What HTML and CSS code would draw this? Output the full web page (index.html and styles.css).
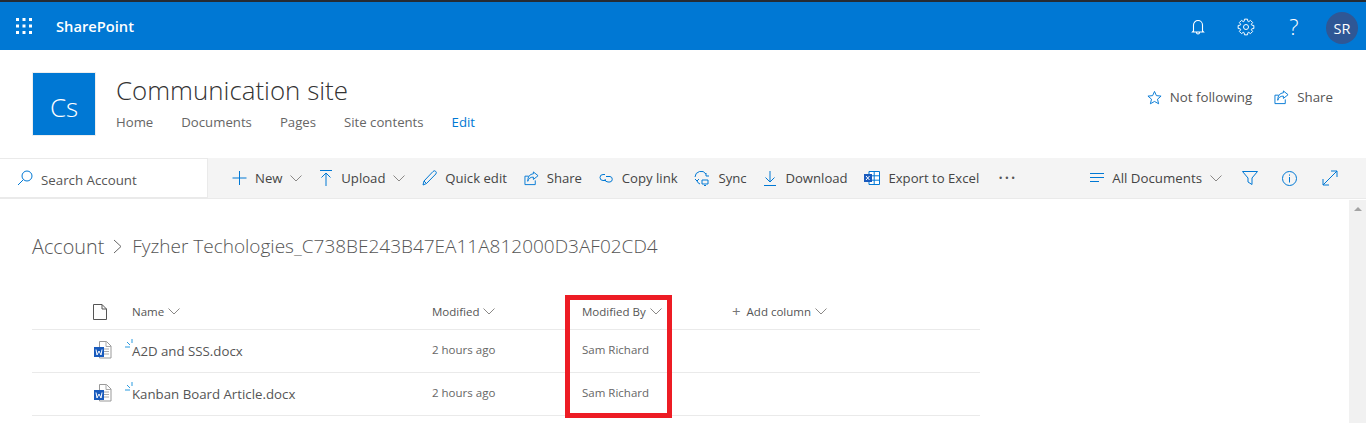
FILE: index.html
```html
<!DOCTYPE html>
<html lang="en">
<head>
    <meta charset="UTF-8">
    <title>Communication site - Account</title>
    <link rel="stylesheet" href="styles.css">
</head>
<body>

<svg class="sprites" width="0" height="0">
    <symbol id="chev" viewBox="0 0 12 7"><path d="M.5.5 6 6 11.500.5" fill="none" stroke="currentColor"/></symbol>
    <symbol id="share" viewBox="0 0 16 16"><path d="M10 1l5 4-5 4V6.500C6.500 6.500 5 8 4 11c0-5 2-7.500 6-8zM12 10v4.500H1v-9h4" fill="none" stroke="currentColor"/></symbol>
    <symbol id="word" viewBox="0 0 18 18">
        <path d="M5.500.5h7l4.500 4.500v12H5.500z" fill="#fff" stroke="#999"/>
        <path d="M12 .5V5.500h5M10 8h5M10 10.500h5M10 13h5" fill="none" stroke="#aaa"/>
        <rect y="6" width="10" height="10" fill="#185abd"/>
        <path d="M2 8.500l1 5.500 2-4 2 4 1-5.500" fill="none" stroke="#fff"/>
    </symbol>
</svg>

<header class="suite-bar">
    <svg class="waffle" width="16" height="16" viewBox="0 0 16 16" fill="#fff">
        <rect width="3" height="3"/><rect x="6.500" width="3" height="3"/><rect x="13" width="3" height="3"/>
        <rect y="6.500" width="3" height="3"/><rect x="6.500" y="6.500" width="3" height="3"/><rect x="13" y="6.500" width="3" height="3"/>
        <rect y="13" width="3" height="3"/><rect x="6.500" y="13" width="3" height="3"/><rect x="13" y="13" width="3" height="3"/>
    </svg>
    <span class="brand">SharePoint</span>
    <div class="suite-icons">
        <span class="suite-slot">
            <svg width="14" height="16" viewBox="0 0 14 16" fill="none" stroke="#fff" stroke-width="1.100"><path d="M2.500 12V6a4.500 4.500 0 0 1 9 0v6l1 1h-11zM5.500 13.500a1.500 1.500 0 0 0 3 0"/></svg>
        </span>
        <span class="suite-slot">
            <svg width="18" height="18" viewBox="-9 -9 18 18" fill="none" stroke="#fff" stroke-linejoin="round">
                <circle r="2.500"/>
                <polygon points="-1.850,-5.710 -1.530,-7.850 1.530,-7.850 1.850,-5.710 2.730,-5.340 4.470,-6.630 6.630,-4.470 5.340,-2.730 5.710,-1.850 7.850,-1.530 7.850,1.530 5.710,1.850 5.340,2.730 6.630,4.470 4.470,6.630 2.730,5.340 1.850,5.710 1.530,7.850 -1.530,7.850 -1.850,5.710 -2.730,5.340 -4.470,6.630 -6.630,4.470 -5.340,2.730 -5.710,1.850 -7.850,1.530 -7.850,-1.530 -5.710,-1.850 -5.340,-2.730 -6.630,-4.470 -4.470,-6.630 -2.730,-5.340"/>
            </svg>
        </span>
        <span class="suite-slot help">?</span>
        <span class="suite-slot"><span class="avatar">SR</span></span>
    </div>
</header>

<section class="site-head">
    <div class="site-logo">Cs</div>
    <div class="site-info">
        <h1>Communication site</h1>
        <nav class="site-nav">
            <a>Home</a>
            <a>Documents</a>
            <a>Pages</a>
            <a>Site contents</a>
            <a class="edit">Edit</a>
        </nav>
    </div>
    <div class="site-actions">
        <span class="action">
            <svg width="15" height="15" viewBox="0 0 16 16" fill="none" stroke="#0078d4"><path d="M8 1.500l2 4.500 5 .5-3.800 3.300 1.200 4.900L8 12.200l-4.400 2.500 1.200-4.900L1 6.500 6 6z"/></svg>
            Not following
        </span>
        <span class="action">
            <svg class="icon-share" width="15" height="15"><use href="#share"/></svg>
            Share
        </span>
    </div>
</section>

<section class="command-row">
    <div class="search-box">
        <svg width="16" height="16" viewBox="0 0 16 16" fill="none" stroke="#0078d4"><circle cx="10" cy="6" r="5"/><path d="M6.500 9.500 1 15"/></svg>
        <span class="search-text">Search Account</span>
    </div>
    <div class="command-bar">
        <div class="commands">
            <span class="cmd">
                <svg width="15" height="14" viewBox="0 0 14 14" stroke="#0078d4"><path d="M7 0v14M0 7h14"/></svg>
                New
                <svg class="chev" width="12" height="7"><use href="#chev"/></svg>
            </span>
            <span class="cmd">
                <svg width="14" height="16" viewBox="0 0 14 16" fill="none" stroke="#0078d4"><path d="M1 .5h12M7 3v13M2.500 7.500 7 3l4.500 4.500"/></svg>
                Upload
                <svg class="chev" width="12" height="7"><use href="#chev"/></svg>
            </span>
            <span class="cmd">
                <svg width="15" height="16" viewBox="0 0 15 16" fill="none" stroke="#0078d4"><path d="M1 15l1-4L11 1.500a1.800 1.800 0 0 1 2.800 2.500L4.500 13.500zM2 11l2.500 2.500"/></svg>
                Quick edit
            </span>
            <span class="cmd">
                <svg class="icon-share" width="15" height="15"><use href="#share"/></svg>
                Share
            </span>
            <span class="cmd">
                <svg width="15" height="10" viewBox="0 0 15 10" fill="none" stroke="#0078d4"><path d="M6 1.500H4a3 3 0 0 0 0 6h2.500M7 3.500h4a2.800 2.800 0 0 1 0 5.500H9a3 3 0 0 1-3-3"/></svg>
                Copy link
            </span>
            <span class="cmd">
                <svg width="16" height="16" viewBox="0 0 16 16" fill="none" stroke="#0078d4"><path d="M1 7a6 6 0 0 1 11-3M15 6h-3V3M1 9l2 2 2-2M3 11a5 5 0 0 0 3 3M8 10h6v4H8zM10 15.500h2"/></svg>
                Sync
            </span>
            <span class="cmd">
                <svg width="14" height="15" viewBox="0 0 14 15" fill="none" stroke="#0078d4"><path d="M7 0v11M2.500 6.500 7 11l4.500-4.500M1 14.500h12"/></svg>
                Download
            </span>
            <span class="cmd">
                <svg width="16" height="14" viewBox="0 0 16 14"><path d="M5 .5h10.500v13H5zM5 4.800h10.500M5 9.200h10.500M10.200.5v13" fill="#fff" stroke="#0078d4"/><rect y="3" width="8" height="8" fill="#185abd"/><path d="M2 5l3.500 4M5.500 5 2 9" stroke="#fff"/></svg>
                Export to Excel
            </span>
            <span class="more">···</span>
        </div>
        <div class="view-tools">
            <span class="cmd view-picker">
                <svg width="14" height="10" viewBox="0 0 14 10" stroke="#0078d4"><path d="M0 .5h14M0 4.500h14M0 8.500h9"/></svg>
                All Documents
                <svg class="chev" width="12" height="7"><use href="#chev"/></svg>
            </span>
            <svg width="16" height="14" viewBox="0 0 16 14" fill="none" stroke="#0078d4"><path d="M.5.500h15L10 7v6.500L6 11V7z"/></svg>
            <svg class="info" width="15" height="15" viewBox="0 0 15 15" fill="none" stroke="#0078d4"><circle cx="7.500" cy="7.500" r="7"/><path d="M7.500 6v5.500M7.500 3.500v1.200"/></svg>
            <svg width="16" height="16" viewBox="0 0 16 16" fill="none" stroke="#0078d4"><path d="M1 15 15 1M9 1h6v6M1 9v6h6"/></svg>
        </div>
    </div>
</section>

<main class="content">
    <div class="library">
        <div class="breadcrumb">
            <span class="crumb">Account</span>
            <svg width="9" height="15" viewBox="0 0 9 15" fill="none" stroke="#666"><path d="M1 1l7 6.500L1 14"/></svg>
            <span class="crumb current">Fyzher Techologies_C738BE243B47EA11A812000D3AF02CD4</span>
        </div>

        <div class="doc-table">
            <div class="doc-row doc-head">
                <span class="col-icon">
                    <svg class="blank-doc" width="14" height="16" viewBox="0 0 14 16" fill="none" stroke="#555"><path d="M.5.500h8.500l4.500 4.500v10.500H.5zM9 .5V5h4.500"/></svg>
                </span>
                <span class="col-name">Name <svg class="chev" width="12" height="7"><use href="#chev"/></svg></span>
                <span class="col-date">Modified <svg class="chev" width="12" height="7"><use href="#chev"/></svg></span>
                <span class="col-by">Modified By <svg class="chev" width="12" height="7"><use href="#chev"/></svg></span>
                <span class="col-add"><i class="plus">+</i> Add column <svg class="chev" width="12" height="7"><use href="#chev"/></svg></span>
            </div>
            <div class="doc-row">
                <span class="col-icon">
                    <svg class="word" width="18" height="18"><use href="#word"/></svg>
                </span>
                <span class="col-name file">
                    <svg class="new-mark" width="9" height="9" viewBox="0 0 9 9" fill="none" stroke="#2b9be0"><path d="M0 8h5M2 3l3 3M7 0v4"/></svg>
                    A2D and SSS.docx
                </span>
                <span class="col-date cell-up">2 hours ago</span>
                <span class="col-by cell-up">Sam Richard</span>
            </div>
            <div class="doc-row">
                <span class="col-icon">
                    <svg class="word" width="18" height="18"><use href="#word"/></svg>
                </span>
                <span class="col-name file">
                    <svg class="new-mark" width="9" height="9" viewBox="0 0 9 9" fill="none" stroke="#2b9be0"><path d="M0 8h5M2 3l3 3M7 0v4"/></svg>
                    Kanban Board Article.docx
                </span>
                <span class="col-date cell-up">2 hours ago</span>
                <span class="col-by cell-up">Sam Richard</span>
            </div>
        </div>
        <div class="highlight"></div>
    </div>
    <div class="scrollbar"><span class="scroll-up"></span></div>
</main>

</body>
</html>
```

FILE: styles.css
```css
* {
    box-sizing: border-box;
}
html, body {
    height: 100%;
}
body {
    margin: 0;
    font-family: "Open Sans", "Noto Sans", Arial, sans-serif;
    font-size: 13.3px;
    color: #333;
    background-color: #fff;
    overflow: hidden;
}
.sprites {
    position: absolute;
}
.chev {
    color: #8a8886;
    flex: none;
}
.icon-share {
    color: #0078d4;
}

/* top blue bar */
.suite-bar {
    display: flex;
    align-items: center;
    height: 50px;
    padding-left: 16px;
    background-color: #0078d4;
    border-top: 2px solid #252b33;
}
.brand {
    margin-left: 24px;
    color: #fff;
    font-size: 14.7px;
    font-weight: 600;
}
.suite-icons {
    display: flex;
    align-items: center;
    margin-left: auto;
}
.suite-slot {
    display: flex;
    align-items: center;
    justify-content: center;
    width: 48px;
}
.suite-slot svg {
    margin-top: 2px;
}
.help {
    color: #fff;
    font-size: 22px;
    font-weight: 300;
    line-height: 1;
}
.avatar {
    display: flex;
    align-items: center;
    justify-content: center;
    width: 32px;
    height: 32px;
    margin-top: 4px;
    border-radius: 50%;
    background-color: #2f5795;
    color: #fff;
    font-size: 14.5px;
}

/* site header */
.site-head {
    display: flex;
    height: 108px;
    padding: 23px 33px 0;
}
.site-logo {
    display: flex;
    align-items: center;
    justify-content: center;
    width: 62px;
    height: 62px;
    padding-top: 5px;
    background-color: #0078d4;
    box-shadow: 0 0 0 1px #eee;
    color: #fff;
    font-size: 26px;
    font-weight: 300;
}
.site-info {
    margin-left: 21px;
    margin-top: -2px;
}
.site-info h1 {
    margin: 0;
    font-size: 25.9px;
    font-weight: 300;
    line-height: 38px;
    color: #333;
}
.site-nav {
    display: flex;
    gap: 28px;
    margin-top: 4px;
    font-size: 13.2px;
    color: #666;
}
.site-nav .edit {
    color: #0078d4;
}
.site-actions {
    display: flex;
    gap: 22px;
    margin-left: auto;
    padding-top: 15px;
    color: #555;
}
.action {
    display: flex;
    align-items: flex-start;
    gap: 8px;
}
.action svg {
    margin-top: 2px;
}

/* search + commands */
.command-row {
    display: flex;
    height: 41px;
    background-color: #f4f4f4;
    border-bottom: 1px solid #eaeaea;
}
.search-box {
    display: flex;
    align-items: center;
    gap: 8px;
    width: 208px;
    padding-left: 17px;
    background-color: #fff;
    border-top: 1px solid #eaeaea;
    border-right: 1px solid #eaeaea;
    border-bottom: 1px solid #eaeaea;
    color: #555;
}
.search-text {
    padding-top: 3px;
}
.command-bar {
    display: flex;
    flex: 1;
    align-items: center;
    justify-content: space-between;
    padding: 0 28px 0 24px;
    color: #444;
}
.commands {
    display: flex;
    align-items: center;
    gap: 16.8px;
    font-size: 13.15px;
}
.cmd {
    display: flex;
    align-items: center;
    gap: 8px;
}
.more {
    margin-left: 2px;
    font-size: 20px;
    letter-spacing: 1px;
    line-height: 1;
    color: #555;
}
.view-tools {
    display: flex;
    align-items: center;
    gap: 24px;
}
.view-picker {
    margin-right: -4px;
}
.info {
    margin-right: 1px;
}

/* list */
.content {
    display: flex;
    height: 225px;
}
.library {
    position: relative;
    flex: 1;
    padding: 0 32px;
}
.breadcrumb {
    display: flex;
    align-items: center;
    gap: 9px;
    height: 94px;
}
.crumb {
    font-size: 19.8px;
    font-weight: 300;
    color: #555;
}
.crumb.current {
    margin-left: 1px;
    font-size: 19px;
    color: #555;
}
.doc-table {
    width: 948px;
    margin-top: -1px;
}
.doc-row {
    display: flex;
    align-items: center;
    height: 43px;
    border-bottom: 1px solid #eaeaea;
    font-size: 11.5px;
    color: #666;
}
.doc-head {
    height: 38px;
    padding-top: 2px;
    color: #555;
}
.col-icon {
    display: flex;
    justify-content: center;
    width: 100px;
    padding-left: 42px;
}
.blank-doc {
    margin-left: -6px;
}
.word {
    margin-bottom: 2px;
}
.col-name, .col-date, .col-by, .col-add {
    display: flex;
    align-items: center;
    gap: 4px;
}
.col-name {
    position: relative;
    width: 300px;
}
.col-date {
    width: 150px;
}
.col-by {
    width: 150px;
}
.cell-up {
    padding-bottom: 4px;
}
.plus {
    margin-right: 2px;
    font-style: normal;
    font-size: 15px;
    line-height: 1;
    color: #777;
}
.file {
    font-size: 13.25px;
    color: #555;
}
.new-mark {
    position: absolute;
    left: -7px;
    top: -3px;
}

/* red box drawn over the column */
.highlight {
    position: absolute;
    left: 565px;
    top: 96px;
    width: 107px;
    height: 123px;
    border: 5px solid #ed1c24;
}
.scrollbar {
    flex: none;
    width: 17px;
    margin-top: 1px;
    background-color: #f1f1f1;
}
.scroll-up {
    display: block;
    width: 0;
    margin: 7px auto 0;
    border-left: 4px solid transparent;
    border-right: 4px solid transparent;
    border-bottom: 4px solid #a3a3a3;
}
```
